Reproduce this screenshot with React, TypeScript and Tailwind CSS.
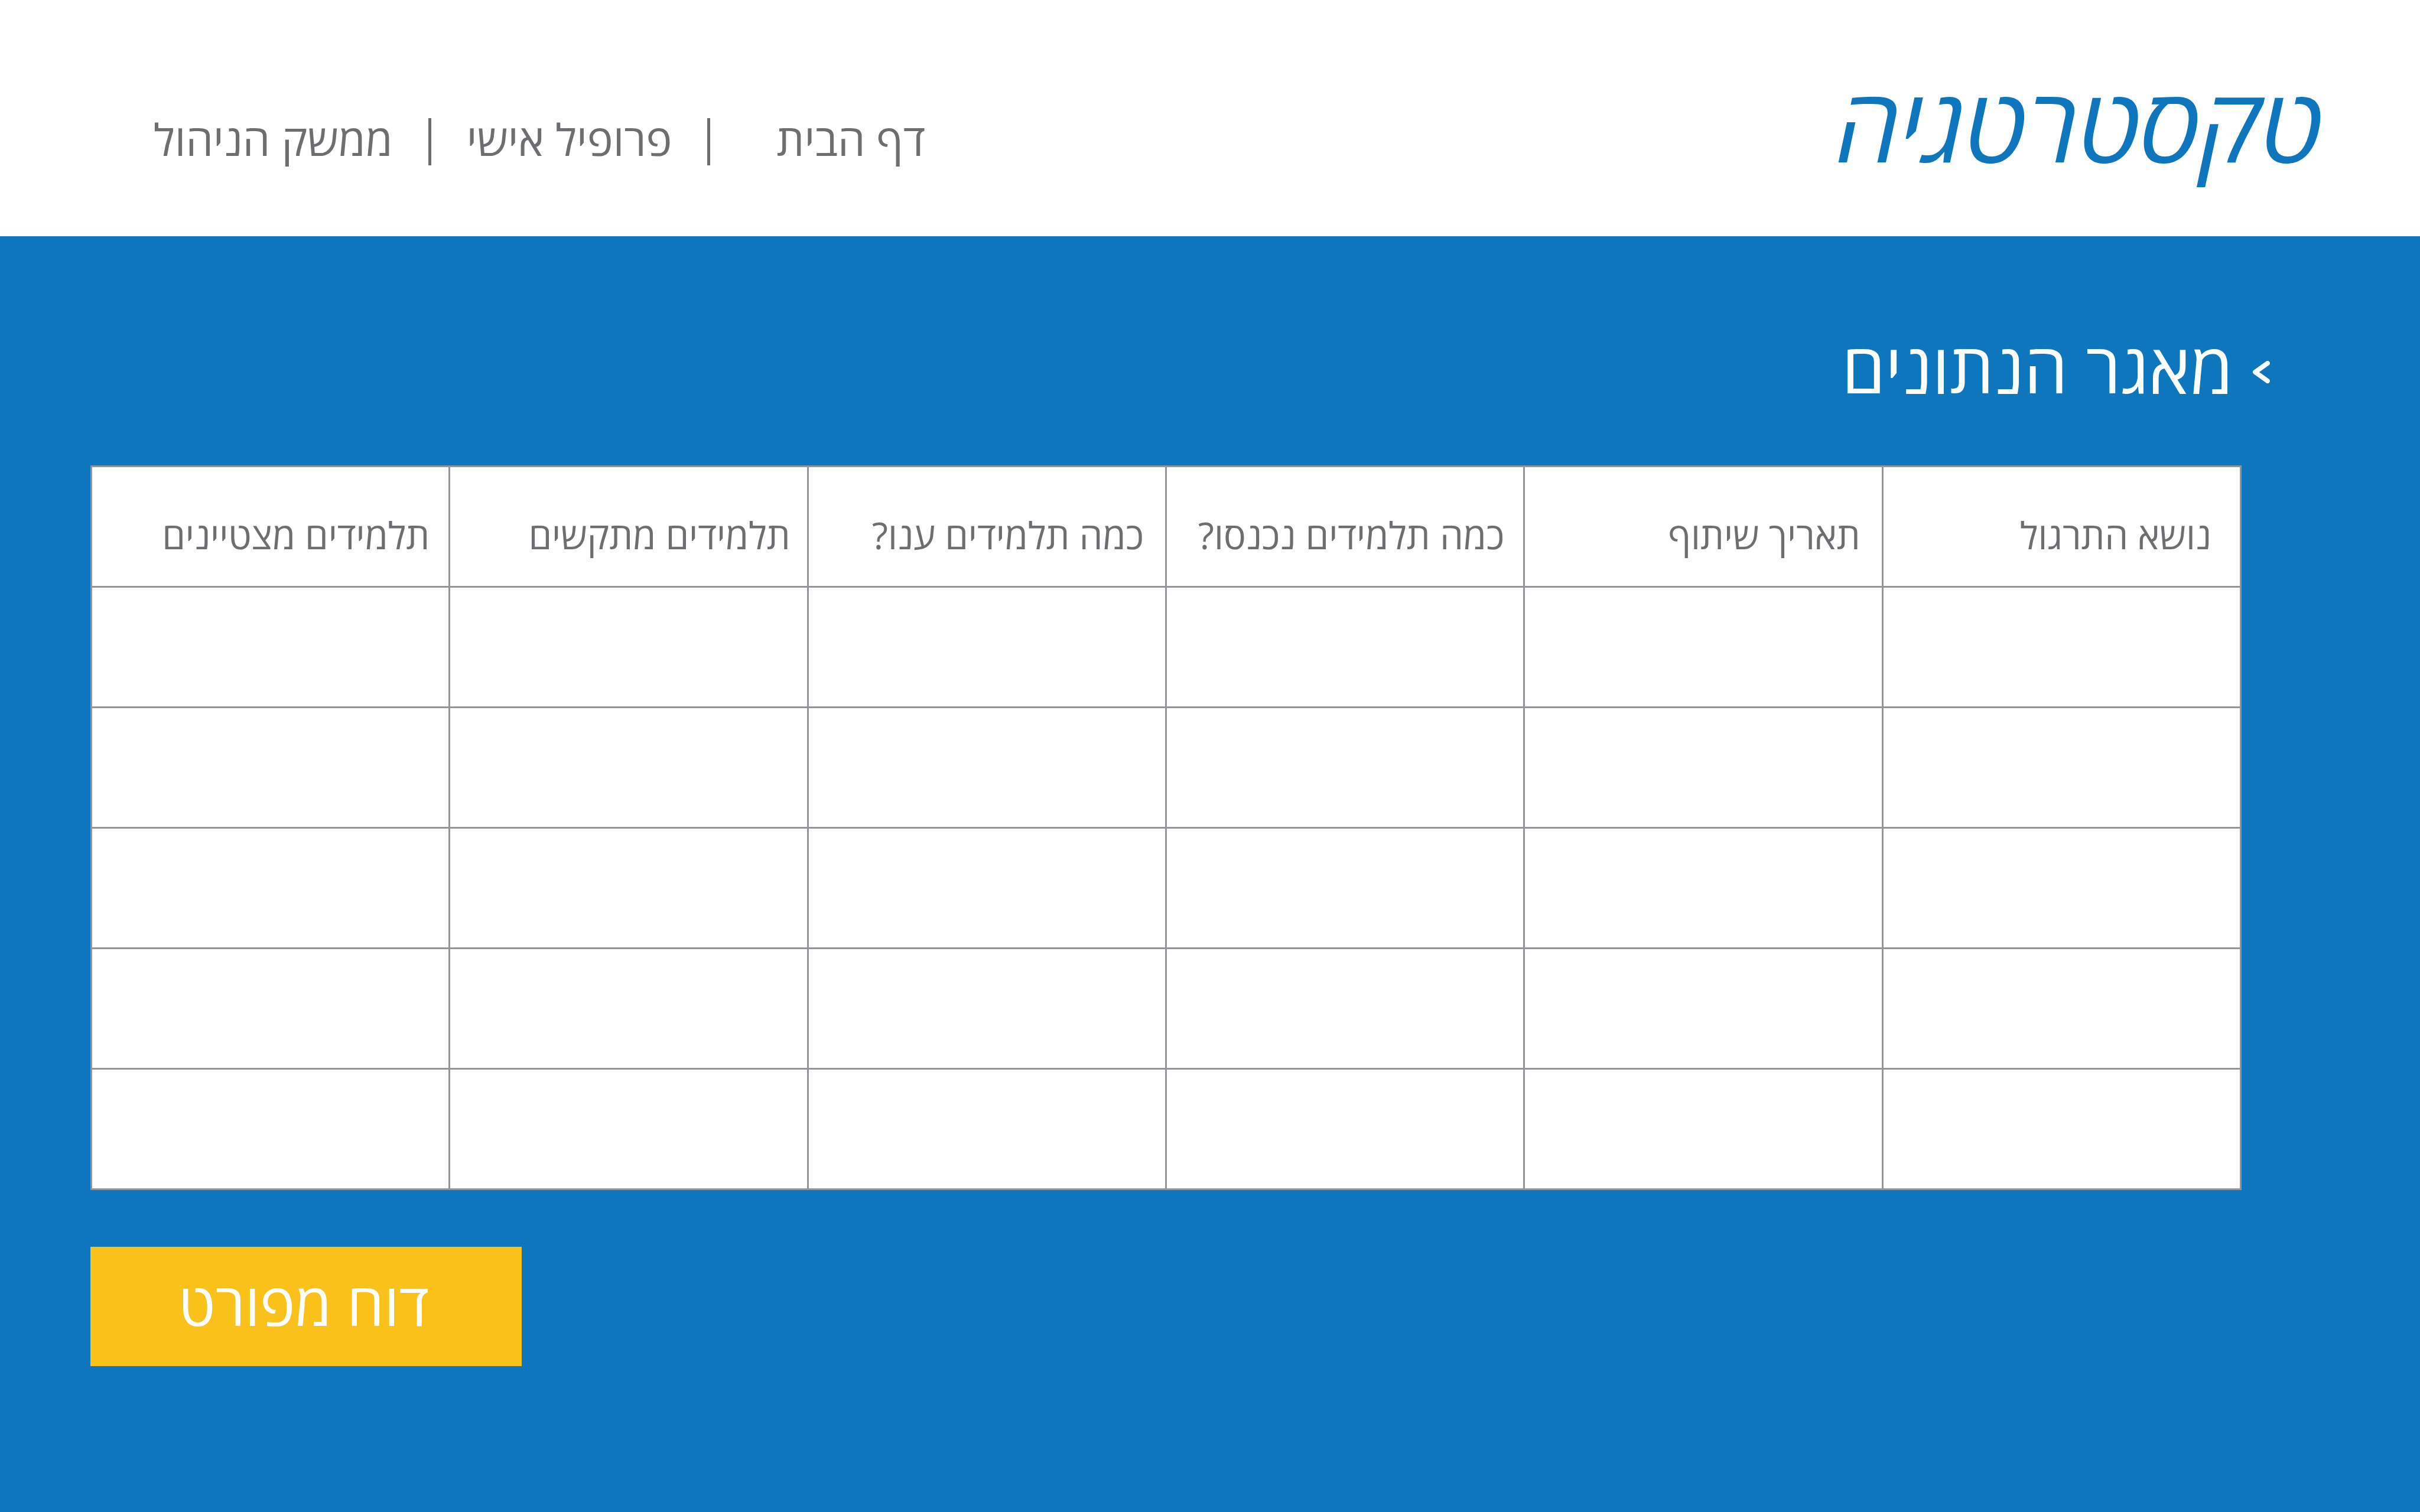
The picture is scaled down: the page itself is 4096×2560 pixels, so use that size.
import React from "react";

const navItems = ["דף הבית", "פרופיל אישי", "ממשק הניהול"];

const columns = [
  { label: "נושא התרגול", pad: "pr-12" },
  { label: "תאריך שיתוף", pad: "pr-9" },
  { label: "כמה תלמידים נכנסו?", pad: "pr-8" },
  { label: "כמה תלמידים ענו?", pad: "pr-9" },
  { label: "תלמידים מתקשים", pad: "pr-7" },
  { label: "תלמידים מצטיינים", pad: "pr-8" },
];

const emptyRows = [1, 2, 3, 4, 5];

function Header() {
  return (
    <header className="flex h-[400px] items-center justify-between bg-white pr-[164px] pl-[260px]">
      <a
        href="#home"
        className="pt-4 text-[174px] leading-[200px] font-medium whitespace-nowrap text-[#0e76bd] italic"
      >
        טקסטרטגיה
      </a>
      <nav aria-label="ראשי" className="flex items-center pt-20">
        {navItems.map((item, i) => (
          <React.Fragment key={item}>
            {i > 0 && (
              <span
                className={
                  i === 1 ? "mr-28 ml-15 h-20 w-[5px] bg-[#6d6e71]" : "mx-15 h-20 w-[5px] bg-[#6d6e71]"
                }
              />
            )}
            <a href={`#section-${i}`} className="pb-2 text-[74px] leading-[80px] whitespace-nowrap">
              {item}
            </a>
          </React.Fragment>
        ))}
      </nav>
    </header>
  );
}

function DataTable() {
  return (
    <table className="mt-20 w-full table-fixed border-collapse bg-white">
      <thead>
        <tr className="h-[204px]">
          {columns.map((c) => (
            <th
              key={c.label}
              scope="col"
              className={`${c.pad} border-[3px] border-[#939598] pt-7 text-right text-[63px] leading-[72px] font-normal whitespace-nowrap`}
            >
              {c.label}
            </th>
          ))}
        </tr>
      </thead>
      <tbody>
        {emptyRows.map((r) => (
          <tr key={r} className="h-[204px]">
            {columns.map((c) => (
              <td key={c.label} className="border-[3px] border-[#939598]" />
            ))}
          </tr>
        ))}
      </tbody>
    </table>
  );
}

export default function App() {
  return (
    <div
      dir="rtl"
      className="flex min-h-screen flex-col bg-[#0e76bd] font-['Open_Sans','Liberation_Sans',sans-serif] text-[#6d6e71]"
    >
      <Header />
      <main className="flex flex-col items-start pt-[152px] pr-[302px] pl-[153px]">
        <h1 className="-mr-12 flex items-center gap-8 text-[118px] leading-[140px] whitespace-nowrap text-white">
          <svg viewBox="0 0 30 38" className="h-[38px] w-[30px]" aria-hidden="true">
            <path
              d="M26 4 L5 19 L26 34"
              fill="none"
              stroke="currentColor"
              strokeWidth="8"
              strokeLinecap="round"
              strokeLinejoin="round"
            />
          </svg>
          <span className="pb-4">מאגר הנתונים</span>
        </h1>
        <DataTable />
        <button
          type="button"
          className="mt-24 flex h-[202px] w-[730px] items-center justify-center self-end bg-[#fac11b] pr-2 pb-3 text-[100px] leading-[120px] whitespace-nowrap text-white"
        >
          דוח מפורט
        </button>
      </main>
    </div>
  );
}
